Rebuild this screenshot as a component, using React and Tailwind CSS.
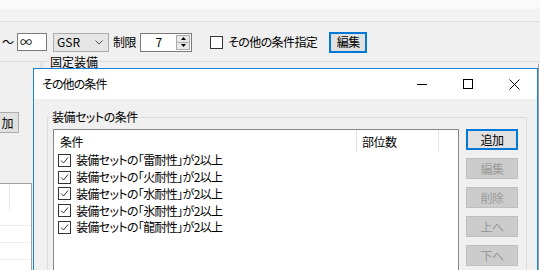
import React from "react";

function Check() {
  return (
    <div className="w-[13px] h-[13px] border border-[#333333] bg-white flex items-center justify-center shrink-0">
      <svg width="11" height="11" viewBox="0 0 11 11">
        <path d="M2 5.5 L4.5 8 L9 2.5" fill="none" stroke="#333333" strokeWidth="1" />
      </svg>
    </div>
  );
}

const rows = ["雷", "火", "水", "氷", "龍"];

export default function App() {
  return (
    <div className="relative w-[540px] h-[270px] overflow-hidden bg-[#f0f0f0] text-[12px] leading-[14px] text-black tracking-[-0.5px] font-['Noto_Sans_CJK_JP',sans-serif] [font-feature-settings:'palt']">
      <div className="h-[9px] bg-[#fafafa]" />
      <div className="h-[13px] bg-[#f3f3f3] border-b border-[#dcdcdc]" />

      {/* controls row */}
      <div className="flex items-center h-[20px] mt-[10px]">
        <span className="w-[17px] pl-[2px]">～</span>
        <div className="w-[30px] h-[18px] bg-white border border-[#7a7a7a] pl-[2px] flex items-center">∞</div>
        <div className="ml-[6px] w-[56px] h-[19px] bg-[#e5e5e5] border border-[#acacac] flex items-center justify-between pl-[3px] pr-[5px]">
          <span className="tracking-normal">GSR</span>
          <svg width="8" height="5" viewBox="0 0 8 5">
            <path d="M0.5 0.5 L4 4 L7.5 0.5" fill="none" stroke="#555555" strokeWidth="1" />
          </svg>
        </div>
        <span className="ml-[4px]">制限</span>
        <div className="ml-[4px] w-[52px] h-[19px] bg-white border border-[#7a7a7a] flex items-center">
          <div className="flex-1 text-center">7</div>
          <div className="w-[14px] h-[15px] mr-[1px] border border-[#acacac] bg-[#e8e8e8] flex flex-col">
            <div className="flex-1 flex items-center justify-center border-b border-[#acacac]">
              <svg width="5" height="3" viewBox="0 0 5 3"><path d="M0 3 L2.5 0 L5 3 Z" fill="#000" /></svg>
            </div>
            <div className="flex-1 flex items-center justify-center">
              <svg width="5" height="3" viewBox="0 0 5 3"><path d="M0 0 L2.5 3 L5 0 Z" fill="#000" /></svg>
            </div>
          </div>
        </div>
        <div className="ml-[18px] w-[13px] h-[13px] border border-[#333333] bg-white" />
        <span className="ml-[5px] tracking-[-0.6px]">その他の条件指定</span>
        <div className="ml-[12px] w-[38px] h-[21px] border-2 border-[#0078d7] bg-[#e1e1e1] flex items-center justify-center">編集</div>
      </div>

      {/* group line + label */}
      <div className="mt-[9px] border-t border-[#dcdcdc] flex">
        <div className="ml-[40px] w-[3px] h-[8px] border-l border-r border-[#dcdcdc]" />
        <span className="ml-[6px] -mt-[7px] px-[1px] bg-[#f0f0f0] h-[14px] tracking-normal">固定装備</span>
      </div>

      {/* lower background */}
      <div className="flex -mt-[8px]">
        <div className="w-[33px] flex flex-col">
          <div className="mt-[50px] w-[19px] h-[21px] bg-[#e1e1e1] border border-[#adadad] border-l-0 flex items-center justify-end pr-[5px]">
            <span>加</span>
          </div>
          <div className="mt-[50px] w-[32px] h-[100px] bg-white border-t border-r border-[#a0a0a0]">
            <div className="flex h-[25px]">
              <div className="w-[10px] border-r border-[#e5e5e5]" />
            </div>
            <div className="h-[17px] border-b border-[#eeeeee]" />
            <div className="h-[17px] border-b border-[#eeeeee]" />
            <div className="h-[17px] border-b border-[#eeeeee]" />
          </div>
        </div>
        <div className="w-[505px]" />
        <div className="w-[2px] mt-[2px] h-[210px] bg-white border-l border-[#a0a0a0]" />
      </div>

      {/* dialog window */}
      <div className="absolute left-[33px] top-[68px] w-[505px] h-[210px] border border-[#1883d7] bg-[#f0f0f0] flex flex-col">
        <div className="h-[30px] bg-white flex items-center shrink-0">
          <span className="pl-[8px] tracking-[-0.9px]">その他の条件</span>
          <div className="ml-auto flex h-full">
            <div className="w-[46px] h-full flex items-center justify-center">
              <svg width="10" height="10" viewBox="0 0 10 10"><path d="M0 5.5 H10" stroke="#000" strokeWidth="1" /></svg>
            </div>
            <div className="w-[46px] h-full flex items-center justify-center">
              <svg width="10" height="10" viewBox="0 0 10 10"><rect x="0.5" y="0.5" width="9" height="9" fill="none" stroke="#000" strokeWidth="1" /></svg>
            </div>
            <div className="w-[46px] h-full flex items-center justify-center">
              <svg width="11" height="11" viewBox="0 0 11 11"><path d="M0.5 0.5 L10.5 10.5 M10.5 0.5 L0.5 10.5" stroke="#000" strokeWidth="1" /></svg>
            </div>
          </div>
        </div>

        <fieldset className="mt-[11px] ml-[13px] mr-[10px] border border-[#dcdcdc] flex-1 pt-[5px] pl-[5px] pr-[7px]">
          <legend className="-ml-[2px] px-[1px] leading-[14px]">装備セットの条件</legend>
          <div className="flex gap-[7px]">
            <div className="w-[406px] h-[160px] bg-white border border-[#828790]">
              <div className="flex h-[22px]">
                <div className="w-[303px] border-r border-[#e5e5e5] pl-[6px] pt-[2px] flex items-center">条件</div>
                <div className="w-[82px] border-r border-[#e5e5e5] pl-[5px] pt-[2px] flex items-center">部位数</div>
              </div>
              {rows.map((r) => (
                <div key={r} className="h-[16.75px] flex items-center pl-[4px]">
                  <Check />
                  <span className="ml-[5px] whitespace-nowrap tracking-[-0.65px]">{`装備セットの「${r}耐性」が2以上`}</span>
                </div>
              ))}
            </div>
            <div className="w-[52px] flex flex-col gap-[8px]">
              <div className="h-[21px] border-2 border-[#0078d7] bg-[#e1e1e1] flex items-center justify-center">追加</div>
              {["編集", "削除", "上へ", "下へ"].map((b) => (
                <div key={b} className="h-[21px] border border-[#bfbfbf] bg-[#cccccc] text-[#9a9a9a] flex items-center justify-center">{b}</div>
              ))}
            </div>
          </div>
        </fieldset>
      </div>
    </div>
  );
}
